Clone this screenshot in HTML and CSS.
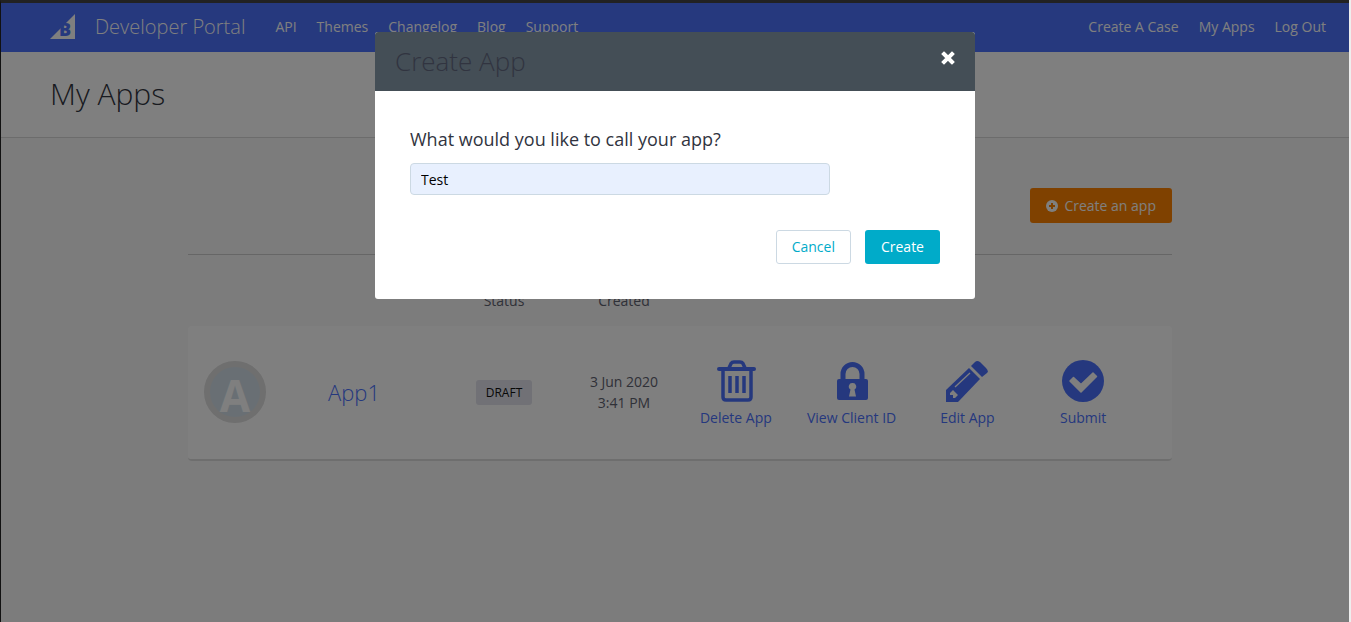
FILE: index.html
```html
<!DOCTYPE html>
<html lang="en">
<head>
  <meta charset="UTF-8" />
  <meta name="viewport" content="width=device-width, initial-scale=1.0"/>
  <title>My Apps - Developer Portal</title>
  <link rel="stylesheet" href="styles.css">
</head>
<body>
  <header class="topbar">
    <a class="brand" href="#">
      <svg class="logo" viewBox="0 0 25 25" aria-hidden="true">
        <path d="M0 25 25 0V25Z" fill="#fff"/>
        <text class="logo-letter" x="9" y="22">B</text>
      </svg>
      <span>Developer Portal</span>
    </a>
    <nav class="main-nav">
      <a href="#">API</a>
      <a href="#">Themes</a>
      <a href="#">Changelog</a>
      <a href="#">Blog</a>
      <a href="#">Support</a>
    </nav>
    <nav class="user-nav">
      <a href="#">Create A Case</a>
      <a href="#">My Apps</a>
      <a href="#">Log Out</a>
    </nav>
  </header>

  <div class="page-title">
    <h1>My Apps</h1>
  </div>

  <main class="content">
    <div class="toolbar">
      <button type="button" class="btn btn-create-app">
        <svg class="plus" viewBox="0 0 12 12" aria-hidden="true">
          <circle cx="6" cy="6" r="6" fill="#fff"/>
          <path d="M6 3v6M3 6h6" stroke="#ff8300" stroke-width="2"/>
        </svg>
        Create an app
      </button>
    </div>

    <table class="apps">
      <thead>
        <tr>
          <th class="col-avatar"></th>
          <th class="col-name"></th>
          <th class="col-status">Status</th>
          <th class="col-created">Created</th>
          <th></th>
        </tr>
      </thead>
      <tbody>
        <tr>
          <td class="cell-avatar"><span class="avatar">A</span></td>
          <td class="cell-name"><a href="#">App1</a></td>
          <td><span class="badge">DRAFT</span></td>
          <td class="cell-created">3 Jun 2020<br>3:41 PM</td>
          <td>
            <div class="actions">
              <a href="#">
                <svg viewBox="0 0 42 42" fill="none" stroke="currentColor" aria-hidden="true">
                  <path d="M4 9H39" stroke-width="4" stroke-linecap="round"/>
                  <path d="M14 8 16 3.500Q17 2 19 2H25Q27 2 28 3.500L30 8" stroke-width="3.500"/>
                  <path d="M8 10V37Q8 40 11 40H33Q36 40 36 37V10" stroke-width="3.500"/>
                  <path d="M15 16V33M22 16V33M29 16V33" stroke-width="3.500"/>
                </svg>
                Delete App
              </a>
              <a href="#">
                <svg viewBox="0 0 42 42" aria-hidden="true">
                  <path d="M12 20V14A9.500 9.500 0 0 1 31 14V20" fill="none" stroke="currentColor" stroke-width="5"/>
                  <rect x="6" y="19" width="31" height="21" rx="2" fill="currentColor"/>
                  <path d="M21.500 23A3.500 3.500 0 0 0 19.500 29.500L18 36.500H25L23.500 29.500A3.500 3.500 0 0 0 21.500 23Z" fill="#fff"/>
                </svg>
                View Client ID
              </a>
              <a href="#">
                <svg viewBox="0 0 42 42" aria-hidden="true">
                  <path d="M0 42V30L23 8 34 19 12 42Z" fill="currentColor"/>
                  <path d="M25 6 29 2Q31 0 34 2L40 8Q43 11 41 13L36 17Z" fill="currentColor"/>
                  <path d="M4 33 7 30 12 35 9 38H7V35H4Z" fill="#fff"/>
                  <path d="M9 27 24 13" stroke="#fff" stroke-width="1.300"/>
                </svg>
                Edit App
              </a>
              <a href="#">
                <svg viewBox="0 0 42 42" aria-hidden="true">
                  <circle cx="21" cy="21" r="21" fill="currentColor"/>
                  <path d="M8 21 11.500 17.500 19 24.500 31 13 34.500 16.500 19 32Z" fill="#fff" stroke="#fff" stroke-width="1.500" stroke-linejoin="round"/>
                </svg>
                Submit
              </a>
            </div>
          </td>
        </tr>
      </tbody>
    </table>
  </main>

  <div class="overlay">
    <div class="modal" role="dialog" aria-modal="true" aria-labelledby="modal-title">
      <div class="modal-header">
        <h2 id="modal-title">Create App</h2>
        <button type="button" class="modal-close" aria-label="Close">
          <svg viewBox="0 0 14 14" aria-hidden="true">
            <path d="M3 3 11 11M11 3 3 11" stroke="#fff" stroke-width="4" stroke-linecap="square"/>
          </svg>
        </button>
      </div>
      <form class="modal-body">
        <label for="app-name">What would you like to call your app?</label>
        <input type="text" id="app-name" value="Test">
        <div class="modal-actions">
          <button type="button" class="btn btn-cancel">Cancel</button>
          <button type="submit" class="btn btn-primary">Create</button>
        </div>
      </form>
    </div>
  </div>
</body>
</html>
```
FILE: styles.css
```css
* {
  box-sizing: border-box;
  margin: 0;
  padding: 0;
}
html {
  background: #eee;
}
body {
  font-family: "Open Sans", sans-serif;
  font-size: 14px;
  line-height: 21px;
  color: #5f6270;
  background: #f8f8f8;
  min-height: 100vh;
  margin-right: 2px;
  border-top: 3px solid #222;
  border-left: 1px solid #111;
}
a {
  text-decoration: none;
  color: #4b71fc;
}
button, input {
  font: inherit;
}

/* top bar */
.topbar {
  display: flex;
  align-items: center;
  height: 49px;
  padding: 0 23px 2px 49px;
  background: #4c72fc;
}
.topbar a {
  color: #fff;
}
.brand {
  display: flex;
  align-items: center;
  gap: 20px;
  margin-right: 30px;
  font-size: 20px;
  font-weight: 300;
}
.logo {
  width: 25px;
  height: 25px;
}
.logo-letter {
  font-size: 18px;
  font-weight: 800;
  fill: #4c72fc;
}
.main-nav, .user-nav {
  display: flex;
  gap: 20px;
}
.user-nav {
  margin-left: auto;
}

.page-title {
  padding: 21px 49px 23px;
  background: #fff;
  border-bottom: 1px solid #d8d8d8;
}
.page-title h1 {
  font-size: 30px;
  font-weight: 300;
  line-height: 41px;
  color: #313440;
}

.content {
  max-width: 994px;
  margin: 0 auto;
  padding: 50px 0 0 10px;
}
.toolbar {
  display: flex;
  justify-content: flex-end;
  padding-bottom: 31px;
  border-bottom: 1px solid #ccc;
}
.btn {
  height: 34px;
  padding: 0 15px;
  border: 1px solid transparent;
  border-radius: 3px;
  cursor: pointer;
}
.btn-create-app {
  display: flex;
  align-items: center;
  gap: 6px;
  height: 35px;
  background: #ff8300;
  color: #fff;
}
.plus {
  width: 12px;
  height: 12px;
}

/* app list */
.apps {
  width: 100%;
  margin-top: 35px;
  table-layout: fixed;
  border-collapse: separate;
  border-spacing: 0;
  text-align: center;
}
.apps th {
  height: 36px;
  padding-bottom: 15px;
  font-weight: 400;
}
.col-avatar {
  width: 140px;
}
.col-name {
  width: 110px;
}
.col-status {
  width: 132px;
}
.col-created {
  width: 108px;
}
.apps td {
  height: 135px;
  background: #fff;
  border-bottom: 2px solid #ddd;
}
.apps td:first-child {
  border-radius: 4px 0 0 4px;
}
.apps td:last-child {
  border-radius: 0 4px 4px 0;
}
.apps .cell-avatar {
  padding: 0 0 2px 16px;
}
.apps .cell-created {
  padding-bottom: 2px;
}
.avatar {
  display: block;
  width: 62px;
  height: 62px;
  border: 6px solid #dedede;
  border-radius: 50%;
  background: #d3dfe8;
  color: #fff;
  font-size: 44px;
  font-weight: 700;
  line-height: 56px;
}
.cell-name {
  text-align: left;
  font-size: 22px;
  font-weight: 300;
}
.badge {
  display: inline-block;
  padding: 2px 10px;
  border-radius: 3px;
  background: #e2e3ec;
  color: #111;
  font-size: 12px;
}
.actions {
  display: grid;
  grid-template-columns: repeat(4, 1fr);
  padding: 2px 31px 0 0;
}
.actions a {
  display: flex;
  flex-direction: column;
  align-items: center;
  gap: 5px;
}
.actions svg {
  width: 42px;
  height: 42px;
}

/* create app dialog */
.overlay {
  position: fixed;
  top: 3px;
  right: 2px;
  bottom: 0;
  left: 1px;
  display: flex;
  justify-content: center;
  align-items: flex-start;
  padding-top: 29px;
  background: rgba(0, 0, 0, 0.5);
}
.modal {
  width: 100%;
  max-width: 600px;
  border-radius: 3px;
  background: #fff;
  overflow: hidden;
}
.modal-header {
  display: flex;
  justify-content: space-between;
  align-items: flex-start;
  padding: 12px 20px;
  background: #444e56;
}
.modal-header h2 {
  font-size: 26px;
  font-weight: 300;
  line-height: 35px;
  color: #313440;
}
.modal-close {
  padding-top: 7px;
  border: none;
  background: none;
  cursor: pointer;
}
.modal-close svg {
  display: block;
  width: 14px;
  height: 14px;
}
.modal-body {
  padding: 35px;
}
.modal-body label {
  display: block;
  margin-bottom: 10px;
  font-size: 18px;
  line-height: 27px;
  color: #313440;
}
.modal-body input {
  display: block;
  width: 420px;
  max-width: 100%;
  height: 32px;
  padding: 0 10px;
  border: 1px solid #ccd9e3;
  border-radius: 4px;
  background: #e8f0fe;
  color: #000;
}
.modal-actions {
  display: flex;
  justify-content: flex-end;
  gap: 14px;
  margin-top: 35px;
}
.modal-actions .btn {
  padding-bottom: 2px;
}
.btn-cancel {
  background: #fff;
  border-color: #ccd9e3;
  color: #00abc9;
}
.btn-primary {
  background: #00abc9;
  color: #fff;
}
```
